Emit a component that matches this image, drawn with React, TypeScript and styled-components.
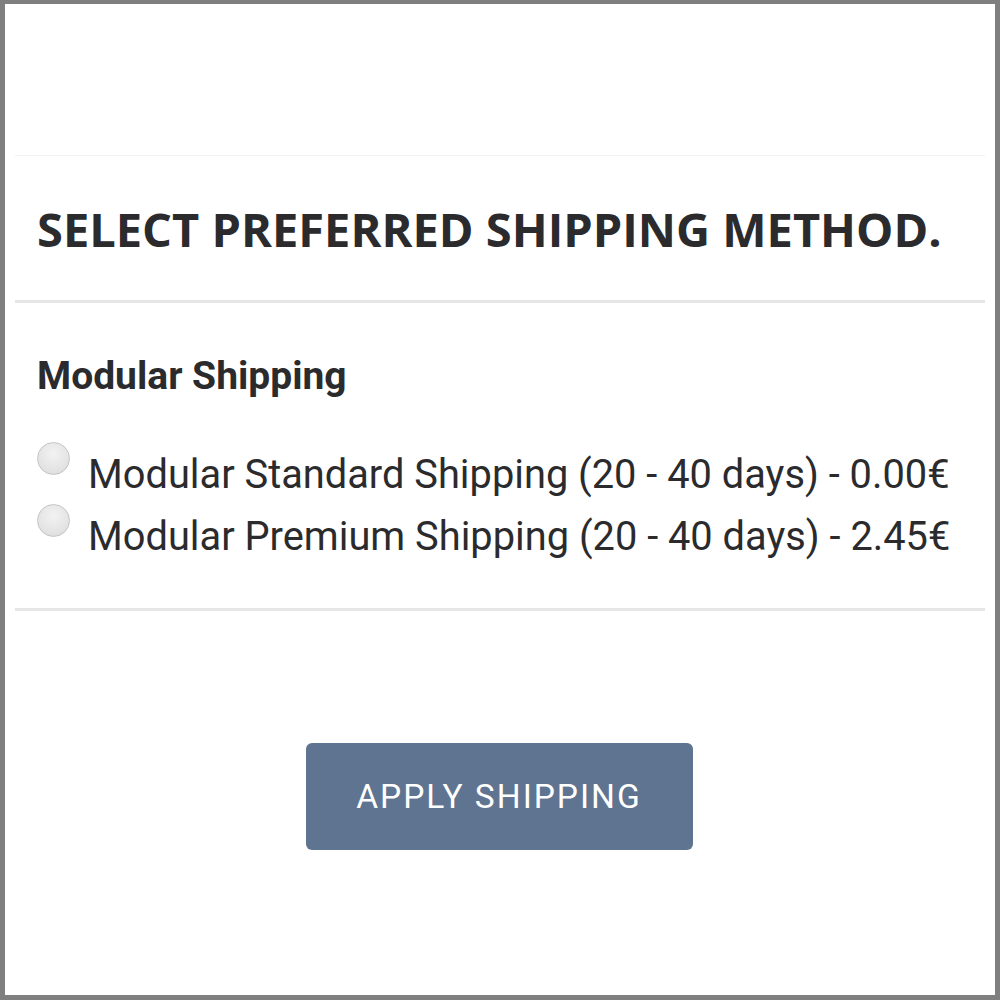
import React from "react";
import styled, { createGlobalStyle } from "styled-components";

const Global = createGlobalStyle`
  html, body { margin: 0; padding: 0; background: #ffffff; }
  * { box-sizing: border-box; }
`;

const Frame = styled.div`
  width: 1000px;
  height: 1000px;
  border: 5px solid #7f7f7f;
  border-top-width: 4px;
  background: #ffffff;
  padding: 0 10px;
  display: flex;
  flex-direction: column;
`;

const Divider = styled.hr<{ $tone: "faint" | "light" }>`
  margin: 0;
  border: none;
  height: ${(p) => (p.$tone === "faint" ? "1px" : "3px")};
  background: ${(p) => (p.$tone === "faint" ? "#f3f3f3" : "#e6e6e6")};
`;

const Spacer = styled.div<{ $h: number }>`
  height: ${(p) => p.$h}px;
  flex: none;
`;

const Title = styled.h1`
  margin: 0;
  padding: 40px 22px 38px;
  font-family: "Open Sans", sans-serif;
  font-weight: 700;
  font-size: 47px;
  line-height: 66px;
  color: #2b2b2d;
  text-transform: uppercase;
  letter-spacing: 0;
  white-space: nowrap;
`;

const Section = styled.div`
  padding: 48px 22px 45px;
`;

const GroupName = styled.h2`
  margin: 0 0 48px;
  font-family: Roboto, sans-serif;
  font-weight: 700;
  font-size: 39px;
  line-height: 50px;
  color: #2b2b2d;
`;

const OptionList = styled.div`
  display: flex;
  flex-direction: column;
  gap: 10px;
`;

const Option = styled.label`
  display: flex;
  align-items: flex-start;
  gap: 18px;
  font-family: Roboto, sans-serif;
  font-size: 39.8px;
  line-height: 52px;
  color: #2b2b2d;
  white-space: nowrap;
`;

const Radio = styled.span`
  flex: none;
  width: 33px;
  height: 33px;
  margin-top: -7px;
  border-radius: 50%;
  border: 1px solid #c4c4c4;
  background: radial-gradient(circle at 50% 35%, #f2f2f2 0%, #e2e2e2 70%, #d6d6d6 100%);
`;

const ButtonRow = styled.div`
  display: flex;
  justify-content: center;
  padding-top: 132px;
`;

const ApplyButton = styled.button`
  width: 387px;
  height: 107px;
  margin-left: -2px;
  border: none;
  border-radius: 6px;
  background: #5f7490;
  color: #ffffff;
  font-family: Roboto, sans-serif;
  font-size: 33.5px;
  letter-spacing: 2px;
  text-transform: uppercase;
  cursor: pointer;
`;

const options = [
  "Modular Standard Shipping (20 - 40 days) - 0.00€",
  "Modular Premium Shipping (20 - 40 days) - 2.45€",
];

export default function App() {
  return (
    <>
      <Global />
      <Frame>
        <Spacer $h={151} />
        <Divider $tone="faint" />
        <Title>Select preferred shipping method.</Title>
        <Divider $tone="light" />
        <Section>
          <GroupName>Modular Shipping</GroupName>
          <OptionList>
            {options.map((o) => (
              <Option key={o}>
                <Radio />
                <span>{o}</span>
              </Option>
            ))}
          </OptionList>
        </Section>
        <Divider $tone="light" />
        <ButtonRow>
          <ApplyButton>Apply shipping</ApplyButton>
        </ButtonRow>
      </Frame>
    </>
  );
}
